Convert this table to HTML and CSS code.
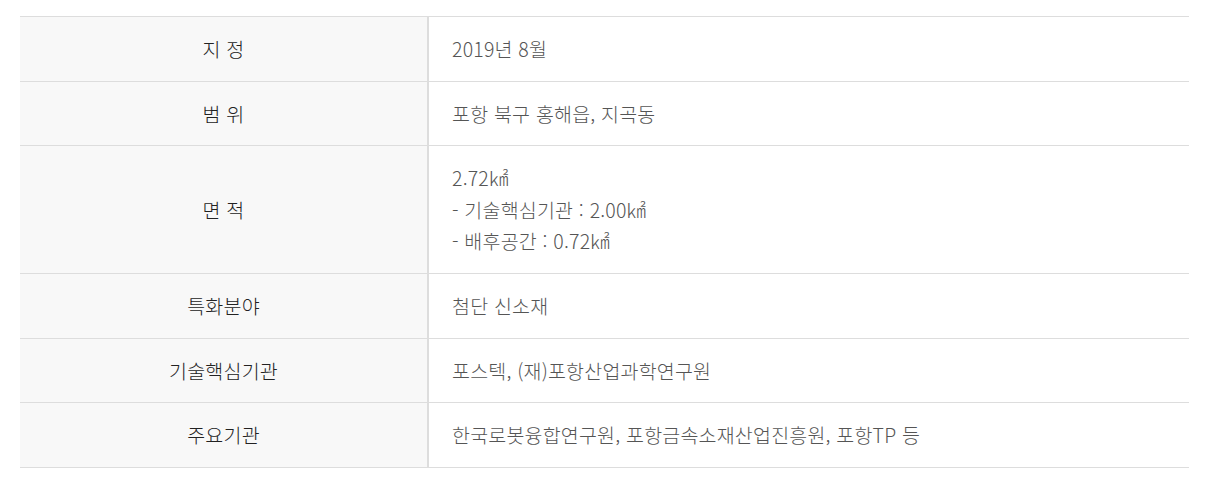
FILE: index.html
```html
<!DOCTYPE html>
<html lang="ko">
<head>
<meta charset="utf-8">
<link rel="stylesheet" href="styles.css">
</head>
<body>
<div class="wrap">
<table class="info">
  <tbody>
    <tr><th>지 정</th><td>2019년 8월</td></tr>
    <tr><th>범 위</th><td>포항 북구 홍해읍, 지곡동</td></tr>
    <tr><th>면 적</th><td>2.72㎢<br>- 기술핵심기관 : 2.00㎢<br>- 배후공간 : 0.72㎢</td></tr>
    <tr><th>특화분야</th><td>첨단 신소재</td></tr>
    <tr><th>기술핵심기관</th><td>포스텍, (재)포항산업과학연구원</td></tr>
    <tr><th>주요기관</th><td>한국로봇융합연구원, 포항금속소재산업진흥원, 포항TP 등</td></tr>
  </tbody>
</table>
</div>
</body>
</html>
```
FILE: styles.css
```css
html, body {
  margin: 0;
  padding: 0;
  background: #fff;
}
.wrap {
  padding: 16px 22px 0 20px;
}
.info {
  width: 1169px;
  border-collapse: collapse;
  border-top: 1px solid #dddddd;
  font-family: "Noto Sans CJK KR", "Noto Sans", sans-serif;
  font-size: 19.5px;
  line-height: 31.6px;
  letter-spacing: 0.2px;
}
.info th, .info td {
  padding: 16px 0;
  border-bottom: 1px solid #dddddd;
  vertical-align: middle;
}
.info th {
  width: 407px;
  background: #f8f8f8;
  color: #222222;
  font-weight: 300;
  text-align: center;
  border-right: 2px solid #dddddd;
}
.info td {
  padding-left: 23px;
  color: #555555;
  font-weight: 300;
  text-align: left;
}
```
